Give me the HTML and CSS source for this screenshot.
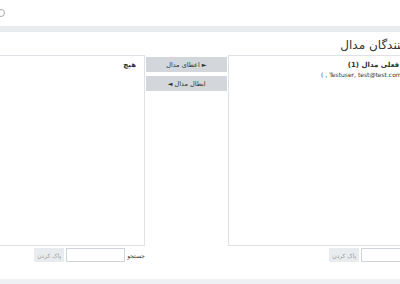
FILE: index.html
```html
<!DOCTYPE html>
<html lang="fa" dir="rtl">
<head>
    <meta charset="utf-8">
    <title>دریافت‌کنندگان مدال</title>
    <link rel="stylesheet" href="styles.css">
</head>
<body>
    <header class="topbar">
        <span class="topbar-icon"></span>
    </header>
    <div class="band"></div>

    <main class="page">
        <h2 class="title">دریافت‌کنندگان مدال</h2>
        <div class="selector">
            <div class="col">
                <div class="listbox">
                    <div class="group">دارندگان فعلی مدال (1)</div>
                    <div class="opt"><span dir="ltr">( , Testuser, test@test.com)</span></div>
                </div>
                <div class="search">
                    <label>جستجو</label>
                    <input type="text">
                    <button class="clear" disabled>پاک کردن</button>
                </div>
            </div>

            <div class="actions">
                <button class="move">► اعطای مدال</button>
                <button class="move">ابطال مدال ◄</button>
            </div>

            <div class="col">
                <div class="listbox">
                    <div class="group">هیچ</div>
                </div>
                <div class="search">
                    <label>جستجو</label>
                    <input type="text">
                    <button class="clear" disabled>پاک کردن</button>
                </div>
            </div>
        </div>
    </main>

    <div class="band bottom"></div>
</body>
</html>
```

FILE: styles.css
```css
body {
    margin: 0;
    font-family: "Liberation Sans", "DejaVu Sans", sans-serif;
    color: #333;
    background: #fff;
    overflow: hidden;
}
.topbar {
    height: 26px;
    display: flex;
    align-items: center;
    justify-content: flex-end;
}
.topbar-icon {
    width: 6px;
    height: 6px;
    margin-left: -3px;
    border: 1px solid #aaa;
    border-radius: 50%;
}
.band {
    height: 6px;
    background: #e9ecef;
}
.band.bottom {
    background: #eef0f3;
}
.page {
    margin: 0 -40px 0 -67px;
    padding: 4px 0 17px;
}
.title {
    margin: 0 -2px 1px 0;
    font-family: "DejaVu Sans", sans-serif;
    font-size: 12px;
    font-weight: normal;
    line-height: 18px;
    color: #333;
}
.selector {
    display: flex;
}
.col {
    width: 212px;
}
.listbox {
    height: 191px;
    border: 1px solid #dee2e6;
    padding: 4px 8px;
    box-sizing: border-box;
    font-family: "DejaVu Sans", sans-serif;
    font-size: 7px;
    line-height: 10px;
}
.group {
    font-weight: bold;
}
.opt {
    text-align: right;
    margin-right: 27px;
    font-size: 6px;
}
.search {
    display: flex;
    align-items: center;
    margin-top: 2px;
    font-family: "DejaVu Sans", sans-serif;
    font-size: 6px;
}
.search label {
    margin-left: 2px;
}
.search input {
    width: 59px;
    height: 14px;
    box-sizing: border-box;
    margin: 0 0 0 2px;
    border: 1px solid #ced4da;
    padding: 0;
}
.clear {
    width: 30px;
    height: 14px;
    padding: 0;
    border: none;
    background: #e9ecef;
    color: #999;
    font-family: "DejaVu Sans", sans-serif;
    font-size: 6px;
}
.actions {
    width: 83px;
    display: flex;
    flex-direction: column;
    gap: 4px;
    padding: 2px 1px 0;
    box-sizing: border-box;
}
.move {
    height: 15px;
    padding: 0;
    border: none;
    background: #d3d7dc;
    color: #333;
    font-family: "DejaVu Sans", sans-serif;
    font-size: 6.5px;
}
```
